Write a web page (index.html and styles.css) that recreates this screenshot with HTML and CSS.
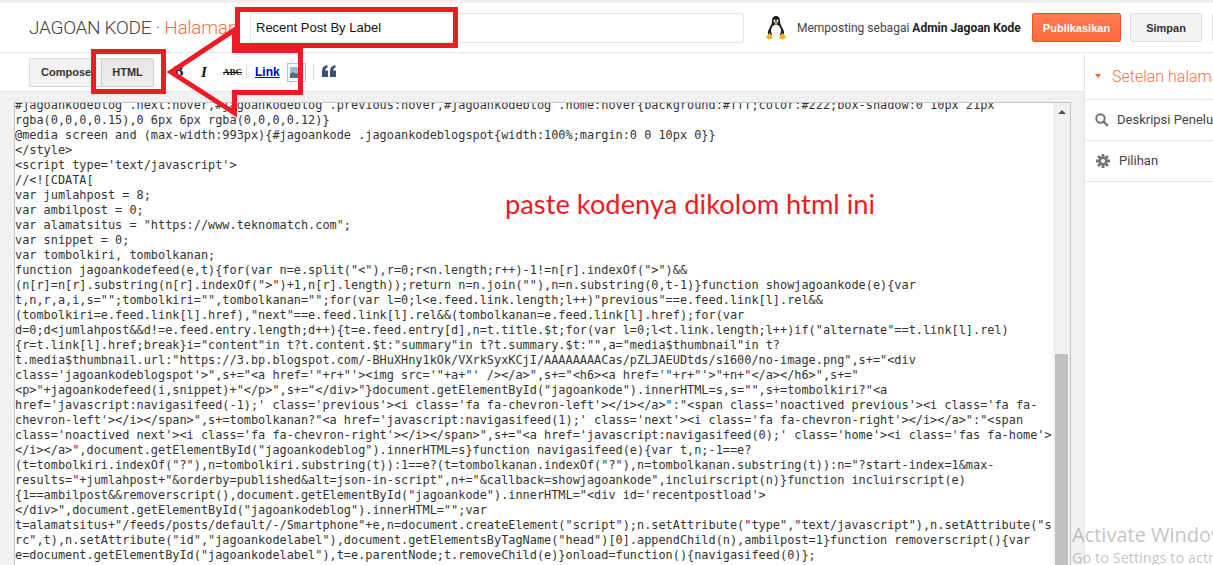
FILE: index.html
```html
<!DOCTYPE html>
<html lang="id">
<head>
<meta charset="utf-8">
<title>Jagoan Kode</title>
<link rel="stylesheet" href="styles.css">
</head>
<body>
<div class="page">
  <header class="top">
    <div class="blog-title">JAGOAN KODE <span class="dot">·</span> <span class="accent">Halaman</span></div>
    <div class="title-box">Recent Post By Label</div>
    <svg class="tux" viewBox="0 0 20 24" width="20" height="24">
      <path d="M10 0C7 0 6 2.500 6 5C6 8 5 9 3.500 12C2.500 14 1.500 16 2 18L4 19L16 19L18 18C18.500 16 17.500 14 16.500 12C15 9 14 8 14 5C14 2.500 13 0 10 0Z" fill="#1c1c1c"/>
      <ellipse cx="10" cy="15" rx="5" ry="6.500" fill="#fff"/>
      <ellipse cx="8.500" cy="4.800" rx="1" ry="1.300" fill="#fff"/>
      <ellipse cx="11.500" cy="4.800" rx="1" ry="1.300" fill="#fff"/>
      <path d="M7.800 6.800L10 5.800L12.200 6.800L10 8.500Z" fill="#e8a91c"/>
      <path d="M0 20.500L3.500 17L6.500 20.500L6 23L2 23.500Z" fill="#f0b41e"/>
      <path d="M20 20.500L16.500 17L13.500 20.500L14 23L18 23.500Z" fill="#f0b41e"/>
    </svg>
    <div class="author">Memposting sebagai <b>Admin Jagoan Kode</b></div>
    <button class="btn primary">Publikasikan</button>
    <button class="btn save">Simpan</button>
    <button class="btn extra"></button>
  </header>
  <div class="body">
    <main class="main">
      <div class="toolbar">
        <div class="mode">
          <button class="mode-btn compose">Compose</button>
          <button class="mode-btn html">HTML</button>
        </div>
        <span class="tool bold">B</span>
        <span class="tool italic">I</span>
        <span class="tool strike">ABC</span>
        <span class="sep"></span>
        <span class="tool link">Link</span>
        <svg class="pic" viewBox="0 0 19 19" width="19" height="19">
          <rect x="0.500" y="0.500" width="18" height="18" fill="#fff" stroke="#b9c3d3"/>
          <rect x="3" y="4" width="13" height="11" fill="#9dbbd8"/>
          <path d="M3 15L3 11L6 9L9 11L12 9L16 12L16 15Z" fill="#5c6a72"/>
        </svg>
        <span class="sep sep-b"></span>
        <svg class="quote" viewBox="0 0 14 12" width="14" height="12">
          <path d="M0 12V6.500C0 3 1.500 1 5.500 0V2.500C4 3 3.300 4 3.200 5.500H6V12ZM8 12V6.500C8 3 9.500 1 13.500 0V2.500C12 3 11.300 4 11.200 5.500H14V12Z" fill="#3b5078"/>
        </svg>
      </div>
      <div class="editor-wrap">
        <div class="editor">
<pre class="code">#jagoankodeblog .next:hover,#jagoankodeblog .previous:hover,#jagoankodeblog .home:hover{background:#fff;color:#222;box-shadow:0 10px 21px
rgba(0,0,0,0.15),0 6px 6px rgba(0,0,0,0.12)}
@media screen and (max-width:993px){#jagoankode .jagoankodeblogspot{width:100%;margin:0 0 10px 0}}
&lt;/style&gt;
&lt;script type='text/javascript'&gt;
//&lt;![CDATA[
var jumlahpost = 8;
var ambilpost = 0;
var alamatsitus = "https://www.teknomatch.com";
var snippet = 0;
var tombolkiri, tombolkanan;
function jagoankodefeed(e,t){for(var n=e.split("&lt;"),r=0;r&lt;n.length;r++)-1!=n[r].indexOf("&gt;")&amp;&amp;
(n[r]=n[r].substring(n[r].indexOf("&gt;")+1,n[r].length));return n=n.join(""),n=n.substring(0,t-1)}function showjagoankode(e){var
t,n,r,a,i,s="";tombolkiri="",tombolkanan="";for(var l=0;l&lt;e.feed.link.length;l++)"previous"==e.feed.link[l].rel&amp;&amp;
(tombolkiri=e.feed.link[l].href),"next"==e.feed.link[l].rel&amp;&amp;(tombolkanan=e.feed.link[l].href);for(var
d=0;d&lt;jumlahpost&amp;&amp;d!=e.feed.entry.length;d++){t=e.feed.entry[d],n=t.title.$t;for(var l=0;l&lt;t.link.length;l++)if("alternate"==t.link[l].rel)
{r=t.link[l].href;break}i="content"in t?t.content.$t:"summary"in t?t.summary.$t:"",a="media$thumbnail"in t?
t.media$thumbnail.url:"https://3.bp.blogspot.com/-BHuXHny1kOk/VXrkSyxKCjI/AAAAAAAACas/pZLJAEUDtds/s1600/no-image.png",s+="&lt;div
class='jagoankodeblogspot'&gt;",s+="&lt;a href='"+r+"'&gt;&lt;img src='"+a+"' /&gt;&lt;/a&gt;",s+="&lt;h6&gt;&lt;a href='"+r+"'&gt;"+n+"&lt;/a&gt;&lt;/h6&gt;",s+="
&lt;p&gt;"+jagoankodefeed(i,snippet)+"&lt;/p&gt;",s+="&lt;/div&gt;"}document.getElementById("jagoankode").innerHTML=s,s="",s+=tombolkiri?"&lt;a
href='javascript:navigasifeed(-1);' class='previous'&gt;&lt;i class='fa fa-chevron-left'&gt;&lt;/i&gt;&lt;/a&gt;":"&lt;span class='noactived previous'&gt;&lt;i class='fa fa-
chevron-left'&gt;&lt;/i&gt;&lt;/span&gt;",s+=tombolkanan?"&lt;a href='javascript:navigasifeed(1);' class='next'&gt;&lt;i class='fa fa-chevron-right'&gt;&lt;/i&gt;&lt;/a&gt;":"&lt;span
class='noactived next'&gt;&lt;i class='fa fa-chevron-right'&gt;&lt;/i&gt;&lt;/span&gt;",s+="&lt;a href='javascript:navigasifeed(0);' class='home'&gt;&lt;i class='fas fa-home'&gt;
&lt;/i&gt;&lt;/a&gt;",document.getElementById("jagoankodeblog").innerHTML=s}function navigasifeed(e){var t,n;-1==e?
(t=tombolkiri.indexOf("?"),n=tombolkiri.substring(t)):1==e?(t=tombolkanan.indexOf("?"),n=tombolkanan.substring(t)):n="?start-index=1&amp;max-
results="+jumlahpost+"&amp;orderby=published&amp;alt=json-in-script",n+="&amp;callback=showjagoankode",incluirscript(n)}function incluirscript(e)
{1==ambilpost&amp;&amp;removerscript(),document.getElementById("jagoankode").innerHTML="&lt;div id='recentpostload'&gt;
&lt;/div&gt;",document.getElementById("jagoankodeblog").innerHTML="";var
t=alamatsitus+"/feeds/posts/default/-/Smartphone"+e,n=document.createElement("script");n.setAttribute("type","text/javascript"),n.setAttribute("s
rc",t),n.setAttribute("id","jagoankodelabel"),document.getElementsByTagName("head")[0].appendChild(n),ambilpost=1}function removerscript(){var
e=document.getElementById("jagoankodelabel"),t=e.parentNode;t.removeChild(e)}onload=function(){navigasifeed(0)};</pre>
          <div class="scrollbar">
            <span class="arrow-up"></span>
            <span class="thumb"></span>
          </div>
        </div>
      </div>
    </main>
    <aside class="side">
      <div class="side-head"><span class="caret"></span><span>Setelan halaman</span></div>
      <div class="side-item">
        <svg class="side-icon" viewBox="0 0 14 14" width="14" height="14"><circle cx="5.500" cy="5.500" r="4.200" fill="none" stroke="#757575" stroke-width="2"/><path d="M8.500 8.500L13 13" stroke="#757575" stroke-width="2.400"/></svg>
        <span>Deskripsi Penelusuran</span>
      </div>
      <div class="side-item gear-item">
        <svg class="side-icon" viewBox="0 0 16 16" width="16" height="16"><path d="M8 1V15M1 8H15M3 3L13 13M13 3L3 13" stroke="#757575" stroke-width="2.800"/><circle cx="8" cy="8" r="4.500" fill="#757575"/><circle cx="8" cy="8" r="2" fill="#fff"/></svg>
        <span>Pilihan</span>
      </div>
    </aside>
  </div>

  <svg class="marks" viewBox="0 0 1213 565" width="1213" height="565">
    <rect x="237.500" y="9.500" width="218" height="36" fill="none" stroke="#ed1c24" stroke-width="5"/>
    <rect x="93.500" y="51.500" width="70" height="40" fill="none" stroke="#ed1c24" stroke-width="5"/>
    <path d="M171 72L234.500 30V50.500H300.500V92.500H234.500V113Z" fill="none" stroke="#ed1c24" stroke-width="5"/>
  </svg>
  <div class="note">paste kodenya dikolom html ini</div>
  <div class="activate">
    <div class="activate-big">Activate Windows</div>
    <div class="activate-small">Go to Settings to activate Windows.</div>
  </div>
</div>
</body>
</html>
```
FILE: styles.css
```css
* { box-sizing: border-box; }
html, body { margin: 0; padding: 0; }
body { background: #fff; font-family: Roboto, "Liberation Sans", sans-serif; color: #333; overflow: hidden; }
.page { position: relative; width: 1213px; height: 565px; overflow: hidden; display: flex; flex-direction: column; }
button { font-family: "Liberation Sans", sans-serif; cursor: default; }

.top { flex: none; height: 53px; border-top: 3px solid #f1f1f1; border-bottom: 1px solid #e5e5e5; display: flex; align-items: center; padding-left: 29px; white-space: nowrap; overflow: hidden; }
.blog-title { flex: none; width: 221px; overflow: hidden; font-size: 19px; letter-spacing: -0.3px; font-weight: 300; color: #434343; }
.dot { color: #666; }
.accent { color: #ff7043; }
.title-box { flex: none; width: 494px; height: 30px; border: 1px solid #e5e5e5; border-radius: 2px; padding: 0 5px; font: 13px/28px "Liberation Sans", sans-serif; color: #111; }
.tux { margin-left: 22px; flex: none; }
.author { flex: none; margin-left: 11px; font-size: 12px; color: #444; width: 235px; }
.author b { color: #222; font-weight: 700; }
.btn { flex: none; height: 29px; border-radius: 2px; font-size: 11px; font-weight: 700; padding: 0; }
.primary { width: 89px; background: linear-gradient(#ff7c55, #ff6a3c); border: 1px solid #f4511e; color: #fff; }
.save { width: 72px; margin-left: 9px; background: #f3f3f3; border: 1px solid #dcdcdc; color: #333; }
.extra { width: 40px; margin-left: 10px; background: #f3f3f3; border: 1px solid #dcdcdc; }

.body { flex: 1; display: flex; min-height: 0; }
.main { flex: none; width: 1084px; background: #f1f1f1; display: flex; flex-direction: column; min-height: 0; }
.toolbar { flex: none; height: 39px; background: #fff; border-bottom: 1px solid #e5e5e5; display: flex; align-items: center; padding-left: 29px; }
.mode { display: flex; }
.mode-btn { height: 29px; font-size: 11px; font-weight: 700; color: #333; background: #f3f3f3; border: 1px solid #dcdcdc; padding: 0; }
.compose { width: 72px; border-right: 0; border-radius: 2px 0 0 2px; text-align: left; padding-left: 11px; }
.html { width: 53px; border-radius: 0 2px 2px 0; background: linear-gradient(#e6e6e6, #eeeeee); border-color: #cfcfcf; }
.tool { flex: none; color: #111; }
.bold { margin-left: 20px; font: 700 14px "Liberation Serif", serif; width: 10px; }
.italic { margin-left: 17px; font: italic 700 15px "Liberation Serif", serif; width: 8px; }
.strike { margin-left: 14px; font: 700 9px "Liberation Serif", serif; text-decoration: line-through; width: 16px; }
.sep { flex: none; width: 1px; height: 16px; background: #d9d9d9; margin-left: 7px; margin-top: -1px; }
.link { margin-left: 8px; font: 700 12px "Liberation Sans", sans-serif; color: #0000cc; text-decoration: underline; width: 25px; }
.pic { flex: none; margin-left: 7px; }
.sep-b { margin-left: 7px; }
.quote { flex: none; margin-left: 8px; margin-top: -2px; }

.editor-wrap { flex: 1; min-height: 0; padding: 10px 13px 0 14px; }
.editor { height: 100%; background: #fff; border: 1px solid #c4c4c4; border-bottom: 0; display: flex; overflow: hidden; }
.code { flex: 1; margin: -5px 0 0; padding: 0; font: 11.88px/15px "DejaVu Sans Mono", monospace; color: #333; overflow: hidden; white-space: pre; min-width: 0; }
.scrollbar { flex: none; width: 17px; background: #f1f1f1; display: flex; flex-direction: column; align-items: center; padding-top: 7px; }
.arrow-up { width: 0; height: 0; border: 4px solid transparent; border-top: 0; border-bottom: 4px solid #505050; }
.thumb { width: 13px; flex: 1; background: #c1c1c1; margin-top: 240px; }

.side { flex: 1; border-left: 1px solid #e5e5e5; background: #fff; white-space: nowrap; overflow: hidden; }
.side-head { height: 47px; display: flex; align-items: center; gap: 11px; padding-left: 10px; font-size: 16px; font-weight: 300; color: #ff7043; border-bottom: 1px solid #e5e5e5; }
.caret { width: 0; height: 0; border: 3.500px solid transparent; border-bottom: 0; border-top: 4px solid #f4611e; }
.side-item { height: 41px; display: flex; align-items: center; gap: 8px; padding-left: 10px; padding-bottom: 1px; font-size: 13px; color: #444; border-bottom: 1px solid #e5e5e5; }
.side-icon { flex: none; }

.marks { position: absolute; left: 0; top: 0; pointer-events: none; }
.note { position: absolute; left: 505px; top: 187px; font: 27.3px/34px Lato, sans-serif; color: #ed1c24; white-space: nowrap; }
.activate { position: absolute; left: 1072px; top: 521px; white-space: nowrap; font-family: "Open Sans", sans-serif; color: rgba(120,120,120,0.45); }
.activate-big { font-size: 20px; line-height: 28px; }
.activate-small { font-size: 14.500px; line-height: 17px; }
```
